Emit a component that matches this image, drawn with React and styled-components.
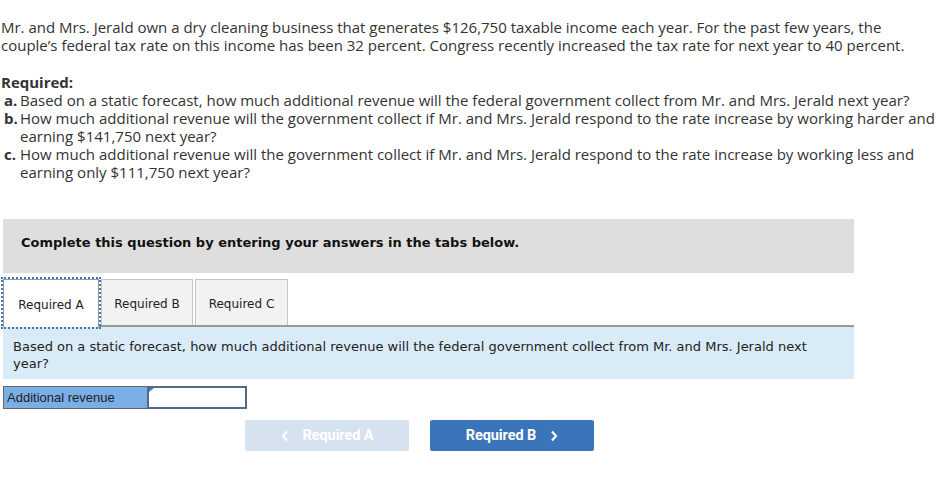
import React from "react";
import styled, { createGlobalStyle } from "styled-components";

const Global = createGlobalStyle`
  body {
    margin: 0;
    background: #fff;
  }
`;

const Page = styled.div`
  width: 943px;
  padding-top: 18px;
`;

const Intro = styled.p`
  margin: 0 0 0 1px;
  font-family: "Open Sans", "Lato", sans-serif;
  font-size: 15px;
  line-height: 18px;
  color: #333;
  width: 912px;
`;

const ReqTitle = styled.div`
  margin: 19px 0 0 1px;
  font-family: "Open Sans", sans-serif;
  font-weight: 700;
  font-size: 15px;
  line-height: 18px;
  color: #333;
`;

const List = styled.ol`
  list-style: none;
  margin: 0;
  padding: 0 0 0 4px;
  font-family: "Open Sans", sans-serif;
  font-size: 15px;
  line-height: 18px;
  color: #333;
`;

const Item = styled.li`
  display: flex;
  align-items: flex-start;
  width: 938px;
`;

const Letter = styled.b`
  width: 16px;
  flex: none;
  line-height: 18px;
`;

const Work = styled.div`
  padding-left: 3px;
  margin-top: 38px;
  width: 851px;
`;

const Banner = styled.div`
  height: 54px;
  box-sizing: border-box;
  background: #dedede;
  display: flex;
  align-items: center;
  padding: 0 0 8px 18px;
  font-family: Verdana, "DejaVu Sans", sans-serif;
  font-weight: 700;
  font-size: 13px;
  color: #111;
`;

const Tabs = styled.div`
  display: flex;
  margin-top: 6px;
  border-bottom: 2px solid #999;
  gap: 2px;
`;

const Tab = styled.div`
  width: ${p => p.$w}px;
  height: 46px;
  display: flex;
  align-items: center;
  justify-content: center;
  padding-top: 3px;
  font-family: Verdana, "DejaVu Sans", sans-serif;
  font-size: 12px;
  color: #222;
  box-sizing: border-box;
  background: ${p => (p.$active ? "#fff" : "#f2f2f2")};
  border: 1px solid #c6c6c6;
  border-bottom: none;
  margin-bottom: ${p => (p.$active ? "-2px" : "0")};
  outline: ${p => (p.$active ? "2px dotted #3d78c0" : "none")};
  outline-offset: 0;
  position: relative;
  z-index: ${p => (p.$active ? 1 : 0)};
  ${p => p.$active && "height: 48px; border-color: #999;"}
`;

const Prompt = styled.div`
  background: #daebf8;
  padding: 11px 40px 10px 10px;
  font-family: Verdana, "DejaVu Sans", sans-serif;
  font-size: 13px;
  line-height: 17px;
  color: #222;
  height: 52px;
  box-sizing: border-box;
`;

const AnswerRow = styled.div`
  display: flex;
  margin-top: 7px;
  height: 23px;
`;

const Label = styled.div`
  width: 144px;
  box-sizing: border-box;
  background: #7aaee6;
  border: 1px solid #666;
  border-right: none;
  display: flex;
  align-items: center;
  padding-left: 3px;
  font-family: "Liberation Sans", Arial, sans-serif;
  font-size: 13px;
  color: #222;
`;

const Field = styled.div`
  width: 100px;
  box-sizing: border-box;
  border: 1px solid #666;
  position: relative;
  background: #fff;
  &::after {
    content: "";
    position: absolute;
    inset: 0;
    border: 1px solid #3d6fb0;
  }
`;

const Flag = styled.span`
  position: absolute;
  top: 1px;
  left: 1px;
  width: 0;
  height: 0;
  border-top: 4px solid #3d78c0;
  border-right: 5px solid transparent;
  border-left: 0;
  z-index: 1;
`;

const Nav = styled.div`
  display: flex;
  gap: 21px;
  margin-top: 11px;
  padding-left: 242px;
`;

const NavButton = styled.button`
  width: 164px;
  height: 31px;
  border: none;
  border-radius: 2px;
  background: ${p => (p.$disabled ? "#d6e2f0" : "#3a75b9")};
  color: #fff;
  font-family: Roboto, sans-serif;
  font-weight: 700;
  font-size: 14.5px;
  display: flex;
  align-items: center;
  justify-content: center;
  gap: 14px;
  letter-spacing: -0.1px;
`;

const Chevron = ({ dir }) => (
  <svg width="8" height="12" viewBox="0 0 8 12">
    <path
      d={dir === "left" ? "M6 1.5 L2 6 L6 10.5" : "M2 1.5 L6 6 L2 10.5"}
      fill="none"
      stroke="#fff"
      strokeWidth="2.2"
    />
  </svg>
);

export default function App() {
  return (
    <Page>
      <Global />
      <Intro>
        Mr. and Mrs. Jerald own a dry cleaning business that generates $126,750 taxable income each year. For
        the past few years, the couple’s federal tax rate on this income has been 32 percent. Congress recently
        increased the tax rate for next year to 40 percent.
      </Intro>
      <ReqTitle>Required:</ReqTitle>
      <List>
        <Item>
          <Letter>a.</Letter>
          <span>Based on a static forecast, how much additional revenue will the federal government collect from Mr. and Mrs. Jerald next year?</span>
        </Item>
        <Item>
          <Letter>b.</Letter>
          <span>How much additional revenue will the government collect if Mr. and Mrs. Jerald respond to the rate increase by working harder and earning $141,750 next year?</span>
        </Item>
        <Item>
          <Letter>c.</Letter>
          <span>How much additional revenue will the government collect if Mr. and Mrs. Jerald respond to the rate increase by working less and earning only $111,750 next year?</span>
        </Item>
      </List>
      <Work>
        <Banner>Complete this question by entering your answers in the tabs below.</Banner>
        <Tabs>
          <Tab $w={96} $active>Required A</Tab>
          <Tab $w={92}>Required B</Tab>
          <Tab $w={93}>Required C</Tab>
        </Tabs>
        <Prompt>
          Based on a static forecast, how much additional revenue will the federal government collect from Mr. and Mrs. Jerald next year?
        </Prompt>
        <AnswerRow>
          <Label>Additional revenue</Label>
          <Field>
            <Flag />
          </Field>
        </AnswerRow>
        <Nav>
          <NavButton $disabled>
            <Chevron dir="left" />
            Required A
          </NavButton>
          <NavButton>
            Required B
            <Chevron dir="right" />
          </NavButton>
        </Nav>
      </Work>
    </Page>
  );
}
